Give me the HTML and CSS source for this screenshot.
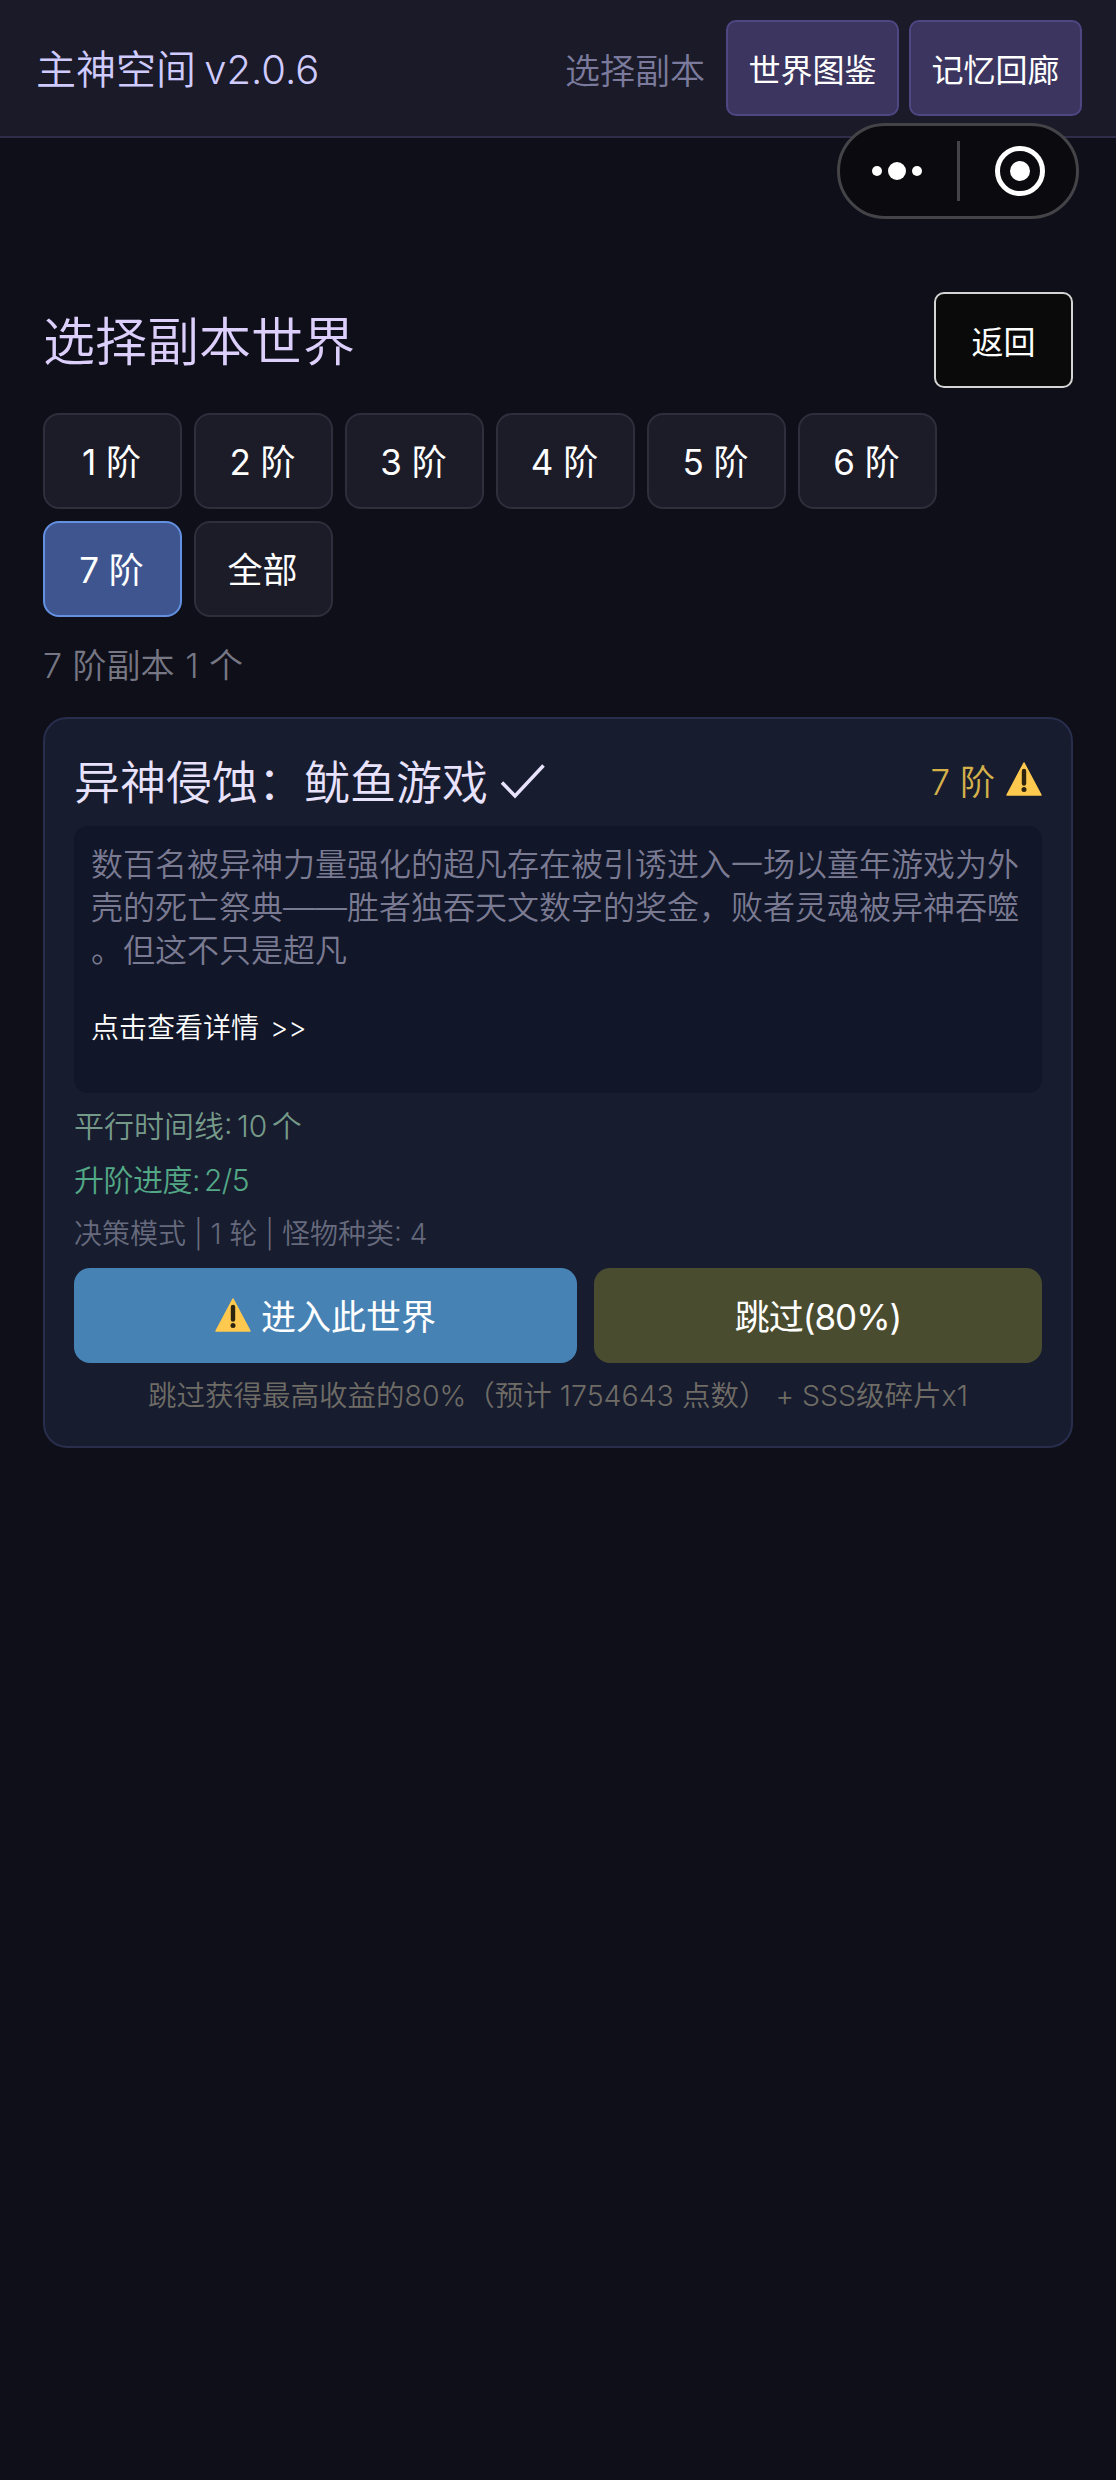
FILE: index.html
```html
<!DOCTYPE html>
<html lang="zh-CN">
<head>
    <meta charset="UTF-8">
    <meta name="viewport" content="width=device-width, initial-scale=1.0">
    <title>主神空间</title>
    <link rel="stylesheet" href="styles.css">
</head>
<body>
    <header class="topbar">
        <div class="app-name">主神空间 v2.0.6</div>
        <div class="topbar-right">
            <span class="topbar-label">选择副本</span>
            <button class="nav-btn">世界图鉴</button>
            <button class="nav-btn">记忆回廊</button>
        </div>
    </header>

    <div class="capsule">
        <svg class="capsule-icon" width="80" height="40" viewBox="0 0 80 40">
            <circle cx="19" cy="20" r="5" fill="#fff"/>
            <circle cx="39" cy="20" r="9" fill="#fff"/>
            <circle cx="59" cy="20" r="5" fill="#fff"/>
        </svg>
        <div class="capsule-line"></div>
        <svg class="capsule-icon" width="60" height="60" viewBox="0 0 60 60">
            <circle cx="30" cy="30" r="22.5" fill="none" stroke="#fff" stroke-width="5"/>
            <circle cx="30" cy="30" r="10" fill="#fff"/>
        </svg>
    </div>

    <main class="page">
        <div class="page-head">
            <h1 class="page-title">选择副本世界</h1>
            <button class="back-btn">返回</button>
        </div>

        <div class="tiers">
            <button class="tier">1 阶</button>
            <button class="tier">2 阶</button>
            <button class="tier">3 阶</button>
            <button class="tier">4 阶</button>
            <button class="tier">5 阶</button>
            <button class="tier">6 阶</button>
            <button class="tier tier-active">7 阶</button>
            <button class="tier">全部</button>
        </div>

        <div class="count">7 阶副本 1 个</div>

        <section class="card">
            <div class="card-head">
                <h2 class="card-title">
                    异神侵蚀：鱿鱼游戏
                    <svg class="check" width="46" height="36" viewBox="0 0 46 36">
                        <path d="M2 18.5 L15 32 L43.500 1.500" fill="none" stroke="#e8e2fc" stroke-width="3.500"/>
                    </svg>
                </h2>
                <div class="card-tier">
                    7 阶
                    <svg class="warn" width="36" height="34" viewBox="0 0 36 34">
                        <path d="M18 1 L35 33 L1 33 Z" fill="#ffc94f" stroke="#ffc94f" stroke-width="1.500" stroke-linejoin="round"/>
                        <path d="M18 9 V21.500" stroke="#2d2410" stroke-width="4.400" stroke-linecap="round"/>
                        <circle cx="18" cy="27.500" r="2.500" fill="#2d2410"/>
                    </svg>
                </div>
            </div>

            <div class="desc">
                <p class="desc-text">数百名被异神力量强化的超凡存在被引诱进入一场以童年游戏为外壳的死亡祭典——胜者独吞天文数字的奖金，败者灵魂被异神吞噬。但这不只是超凡</p>
                <div class="desc-more">点击查看详情 &gt;&gt;</div>
            </div>

            <div class="stat stat-time">平行时间线: 10 个</div>
            <div class="stat stat-progress">升阶进度: 2/5</div>
            <div class="stat stat-mode">决策模式 | 1 轮 | 怪物种类: 4</div>

            <div class="actions">
                <button class="enter-btn">
                    <svg class="warn" width="36" height="34" viewBox="0 0 36 34">
                        <path d="M18 1 L35 33 L1 33 Z" fill="#ffc94f" stroke="#ffc94f" stroke-width="1.500" stroke-linejoin="round"/>
                        <path d="M18 9 V21.500" stroke="#2d2410" stroke-width="4.400" stroke-linecap="round"/>
                        <circle cx="18" cy="27.500" r="2.500" fill="#2d2410"/>
                    </svg>
                    进入此世界
                </button>
                <button class="skip-btn">跳过(80%)</button>
            </div>
            <div class="hint">跳过获得最高收益的80%（预计 1754643 点数） + SSS级碎片x1</div>
        </section>
    </main>
</body>
</html>
```

FILE: styles.css
```css
* {
    box-sizing: border-box;
}
body {
    margin: 0;
    min-height: 100vh;
    background-color: #0e0f18;
    color: #fff;
    font-family: Inter, "Noto Sans CJK SC", sans-serif;
    font-weight: 350;
}
button {
    font-family: inherit;
    font-weight: 400;
    color: #fff;
    cursor: pointer;
}
h1, h2, p {
    margin: 0;
    font-weight: inherit;
}

/* top bar */
.topbar {
    display: flex;
    align-items: center;
    justify-content: space-between;
    height: 138px;
    padding: 0 34px 0 36px;
    background: #1a1a28;
    border-bottom: 2px solid #2f2d4a;
}
.app-name {
    padding-bottom: 2px;
    font-size: 40px;
    word-spacing: -3px;
    color: #cfcbff;
}
.topbar-right {
    display: flex;
    align-items: center;
    gap: 10px;
}
.topbar-label {
    margin-right: 11px;
    font-size: 35px;
    color: #7b7a9c;
}
.nav-btn {
    width: 173px;
    height: 96px;
    padding: 0;
    font-size: 32px;
    background: #3b3560;
    border: 2px solid #4e4784;
    border-radius: 10px;
}

/* wechat capsule */
.capsule {
    position: absolute;
    top: 123px;
    left: 837px;
    display: flex;
    align-items: center;
    width: 242px;
    height: 96px;
    background: #0a0a0f;
    border: 3px solid #444448;
    border-radius: 48px;
}
.capsule-icon {
    flex: none;
}
.capsule-icon:first-child {
    margin-left: 18px;
}
.capsule-line {
    width: 3px;
    height: 60px;
    margin: 0 30px 0 19px;
    background: #444448;
}

/* page */
.page {
    padding: 0 43px;
}
.page-head {
    display: flex;
    align-items: center;
    justify-content: space-between;
    margin-top: 154px;
}
.page-title {
    padding-bottom: 4px;
    font-size: 52px;
    color: #dccffc;
}
.back-btn {
    width: 139px;
    height: 96px;
    padding: 0;
    font-size: 32px;
    background: #0a0a0a;
    border: 2px solid #d4d4d4;
    border-radius: 10px;
}

.tiers {
    display: flex;
    flex-wrap: wrap;
    gap: 12px;
    width: 900px;
    margin-top: 25px;
}
.tier {
    width: 139px;
    height: 96px;
    padding: 0 2px 3px 0;
    font-size: 35px;
    background: #1c1c28;
    border: 2px solid #2e2e3c;
    border-radius: 16px;
}
.tier-active {
    background: #3e5590;
    border-color: #6390e0;
}

.count {
    margin-top: 24px;
    font-size: 34px;
    line-height: 50px;
    word-spacing: 1px;
    color: #767684;
}

/* card */
.card {
    margin-top: 26px;
    padding: 27px 29px 26px;
    background: #171c2f;
    border: 2px solid #282e4c;
    border-radius: 24px;
}
.card-head {
    display: flex;
    align-items: center;
    justify-content: space-between;
    height: 66px;
}
.card-title {
    display: flex;
    align-items: center;
    gap: 12px;
    font-size: 46px;
    color: #e8e2fc;
}
.check {
    flex: none;
    margin-top: 5px;
}
.card-tier {
    display: flex;
    align-items: center;
    gap: 11px;
    font-size: 35px;
    color: #d4b04a;
}
.warn {
    flex: none;
}
.desc {
    height: 267px;
    margin-top: 14px;
    padding: 17px 17px 0;
    background: #111628;
    border-radius: 14px;
}
.desc-text {
    font-size: 32px;
    line-height: 43px;
    color: #7a7a92;
    line-break: anywhere;
}
.desc-more {
    margin-top: 34px;
    font-size: 28px;
    line-height: 44px;
    word-spacing: 3px;
}
.stat {
    font-size: 30px;
    line-height: 54px;
    word-spacing: -4px;
}
.stat-time {
    margin-top: 6px;
    color: #769a89;
}
.stat-progress {
    color: #53a886;
    letter-spacing: -0.5px;
}
.stat-mode {
    font-size: 28px;
    word-spacing: 0;
    color: #666a7c;
}
.actions {
    display: flex;
    gap: 17px;
    margin-top: 7px;
}
.enter-btn,
.skip-btn {
    display: flex;
    align-items: center;
    justify-content: center;
    gap: 10px;
    height: 95px;
    padding: 0 0 2px;
    font-size: 35px;
    border: 0;
    border-radius: 16px;
}
.enter-btn {
    width: 504px;
    background: #4682b4;
}
.skip-btn {
    width: 449px;
    background: #4a4c30;
    letter-spacing: -1px;
}
.hint {
    margin-top: 9px;
    font-size: 28.5px;
    line-height: 48px;
    text-align: center;
    color: #6f6c66;
}
```
